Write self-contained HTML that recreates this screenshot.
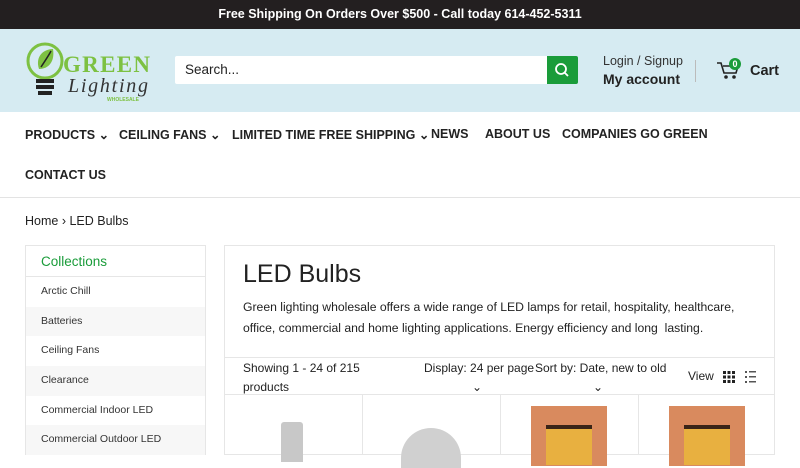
<!DOCTYPE html>
<html><head><meta charset="utf-8"><style>
*{box-sizing:border-box;margin:0;padding:0}
body{width:800px;height:450px;overflow:hidden;font-family:"Liberation Sans",sans-serif;background:#fff;color:#222;position:relative;white-space:nowrap}
.top{height:29px;background:#231f20;color:#fff;font-size:12.5px;font-weight:bold;text-align:center;line-height:29px}
.hdr{height:83px;background:#d6ebf2;position:relative}
.search{position:absolute;left:175px;top:27px;width:403px;height:28px;background:#fff;border-radius:2px;font-size:13.5px;line-height:28px;padding-left:10px;color:#222}
.sbtn{position:absolute;right:0;top:0;width:31px;height:28px;background:#1a9c3a;border-radius:0 2px 2px 0}
.acct{position:absolute;left:603px;top:25px;font-size:12.5px;color:#333}
.acct b{display:block;font-size:14px;color:#222;margin-top:3px}
.sep{position:absolute;left:695px;top:31px;width:1px;height:22px;background:#bbb}
.cart{position:absolute;left:750px;top:34px;font-size:14.5px;font-weight:bold}
.nav{position:absolute;top:112px;left:0;width:800px;height:86px;border-bottom:1px solid #e3e3e3;font-size:12.5px;font-weight:bold;color:#222}
.nav span{position:absolute}
.crumb{position:absolute;top:214px;left:25px;font-size:12.5px}
.side{position:absolute;left:25px;top:245px;width:181px;height:210px;border:1px solid #e6e6e6}
.side .h{height:31px;line-height:31px;padding-left:15px;color:#1a9c3a;font-size:13.5px;border-bottom:1px solid #e6e6e6}
.side div.i{height:29.7px;line-height:29.7px;padding-left:15px;font-size:10.5px;color:#333}
.side div.i:nth-child(odd){background:#f7f7f7}
.main{position:absolute;left:224px;top:245px;width:551px;height:210px;border:1px solid #e6e6e6}
h1{font-weight:normal;font-size:25px;position:absolute;left:18px;top:14px;color:#222}
.desc{position:absolute;left:18px;top:51px;font-size:12.2px;line-height:21px;color:#222}
.bar{position:absolute;left:0;top:111px;width:549px;height:38px;border-top:1px solid #e6e6e6;border-bottom:1px solid #e6e6e6;font-size:12px}
.bar span{position:absolute}
.cell{position:absolute;top:149px;width:138px;height:60px;border-right:1px solid #e6e6e6}
</style></head><body>
<div class="top">Free Shipping On Orders Over $500 - Call today 614-452-5311</div>
<div class="hdr">
<svg style="position:absolute;left:25px;top:10px" width="130" height="64" viewBox="0 0 130 64">
<circle cx="20" cy="22" r="17" fill="none" stroke="#7dc142" stroke-width="3"/>
<path d="M14 30 C10 18 18 10 28 10 C30 22 24 30 14 30Z" fill="#7dc142"/>
<path d="M16 28 C20 22 24 16 26 12" stroke="#222" stroke-width="1.5" fill="none"/>
<rect x="11" y="40" width="18" height="4" fill="#222"/><rect x="11" y="46" width="18" height="4" fill="#222"/><rect x="13" y="52" width="14" height="4" fill="#222"/>
<text x="38" y="33" font-family="Liberation Serif,serif" font-weight="bold" font-size="23" fill="#7dc142" textLength="87">GREEN</text>
<text x="43" y="53" font-family="Liberation Serif,serif" font-style="italic" font-size="20" fill="#333" textLength="80">Lighting</text>
<text x="82" y="62" font-family="Liberation Sans,sans-serif" font-weight="bold" font-size="5" fill="#7dc142">WHOLESALE</text>
</svg>
<div class="search">Search...<div class="sbtn"><svg width="31" height="28"><circle cx="14" cy="13" r="5" stroke="#fff" stroke-width="1.8" fill="none"/><line x1="18" y1="17" x2="21" y2="20" stroke="#fff" stroke-width="1.8"/></svg></div></div>
<div class="acct">Login / Signup<b>My account</b></div>
<div class="sep"></div>
<svg style="position:absolute;left:716px;top:28px" width="30" height="22"><path d="M1 6h4l3 10h12l2-7H7" stroke="#222" stroke-width="1.6" fill="none"/><circle cx="10" cy="20" r="1.8" fill="#222"/><circle cx="18" cy="20" r="1.8" fill="#222"/><circle cx="19" cy="7" r="6" fill="#1a9c3a"/><text x="19" y="10" font-size="9" font-weight="bold" fill="#fff" text-anchor="middle" font-family="Liberation Sans">0</text></svg>
<div class="cart">Cart</div>
</div>
<div class="nav">
<span style="left:25px;top:15px">PRODUCTS ⌄</span>
<span style="left:119px;top:15px">CEILING FANS ⌄</span>
<span style="left:232px;top:15px">LIMITED TIME FREE SHIPPING ⌄</span>
<span style="left:431px;top:15px">NEWS</span>
<span style="left:485px;top:15px">ABOUT US</span>
<span style="left:562px;top:15px">COMPANIES GO GREEN</span>
<span style="left:25px;top:56px">CONTACT US</span>
</div>
<div class="crumb">Home › LED Bulbs</div>
<div class="side"><div class="h">Collections</div>
<div class="i">Arctic Chill</div><div class="i">Batteries</div><div class="i">Ceiling Fans</div><div class="i">Clearance</div><div class="i">Commercial Indoor LED</div><div class="i">Commercial Outdoor LED</div></div>
<div class="main">
<h1>LED Bulbs</h1>
<div class="desc">Green lighting wholesale offers a wide range of LED lamps for retail, hospitality, healthcare,<br>office, commercial and home lighting applications. Energy efficiency and long&nbsp; lasting.</div>
<div class="bar">
<span style="left:18px;top:1px;line-height:19px">Showing 1 - 24 of 215<br>products</span>
<span style="left:199px;top:1px;line-height:19px">Display: 24 per page<br><span style="position:static;padding-left:48px">⌄</span></span>
<span style="left:310px;top:1px;line-height:19px">Sort by: Date, new to old<br><span style="position:static;padding-left:58px">⌄</span></span>
<span style="left:463px;top:11px">View</span>
<svg style="position:absolute;left:498px;top:13px" width="40" height="13"><g fill="#222"><rect x="0" y="0" width="3" height="3"/><rect x="4.5" y="0" width="3" height="3"/><rect x="9" y="0" width="3" height="3"/><rect x="0" y="4.5" width="3" height="3"/><rect x="4.5" y="4.5" width="3" height="3"/><rect x="9" y="4.5" width="3" height="3"/><rect x="0" y="9" width="3" height="3"/><rect x="4.5" y="9" width="3" height="3"/><rect x="9" y="9" width="3" height="3"/></g><g fill="#555"><rect x="22" y="0" width="2" height="2"/><rect x="26" y="0" width="7" height="1.5"/><rect x="22" y="5" width="2" height="2"/><rect x="26" y="5" width="7" height="1.5"/><rect x="22" y="10" width="2" height="2"/><rect x="26" y="10" width="7" height="1.5"/></g></svg>
</div>
<div class="cell" style="left:0"><div style="position:absolute;left:56px;top:27px;width:22px;height:40px;background:#c8c8c8;border-radius:3px 3px 0 0"></div></div>
<div class="cell" style="left:138px"><div style="position:absolute;left:38px;top:33px;width:60px;height:40px;background:#d0d0d0;border-radius:30px 30px 0 0"></div></div>
<div class="cell" style="left:276px"><div style="position:absolute;left:30px;top:11px;width:76px;height:60px;background:#d98a5e"></div><div style="position:absolute;left:45px;top:30px;width:46px;height:40px;background:#e8b040;border-top:4px solid #3a2418"></div></div>
<div class="cell" style="left:414px;border:none"><div style="position:absolute;left:30px;top:11px;width:76px;height:60px;background:#d98a5e"></div><div style="position:absolute;left:45px;top:30px;width:46px;height:40px;background:#e8b040;border-top:4px solid #3a2418"></div></div>
</div>
</body></html>
